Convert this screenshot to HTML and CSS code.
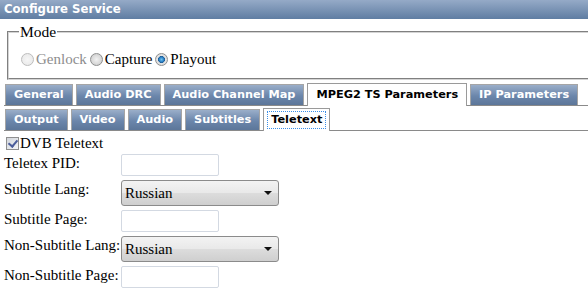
FILE: index.html
```html
<!DOCTYPE html>
<html lang="en">
<head>
    <meta charset="UTF-8">
    <title>Configure Service</title>
    <link rel="stylesheet" href="styles.css">
</head>
<body>
    <!-- title bar -->
    <div class="panel-title">Configure Service</div>

    <!-- mode -->
    <fieldset class="mode-box">
        <legend>Mode</legend>
        <div class="mode-options">
            <label class="mode-option disabled"><input type="radio" name="mode" disabled>Genlock</label>
            <label class="mode-option"><input type="radio" name="mode">Capture</label>
            <label class="mode-option"><input type="radio" name="mode" checked>Playout</label>
        </div>
    </fieldset>

    <!-- main tabs -->
    <div class="tabs">
        <a class="tab">General</a>
        <a class="tab">Audio DRC</a>
        <a class="tab">Audio Channel Map</a>
        <a class="tab active">MPEG2 TS Parameters</a>
        <a class="tab">IP Parameters</a>
    </div>

    <!-- sub tabs -->
    <div class="tabs sub-tabs">
        <a class="tab">Output</a>
        <a class="tab">Video</a>
        <a class="tab">Audio</a>
        <a class="tab">Subtitles</a>
        <a class="tab active"><span class="focus">Teletext</span></a>
    </div>

    <label class="check-row"><input type="checkbox" checked>DVB Teletext</label>

    <div class="form-grid">
        <label class="field-label">Teletex PID:</label>
        <input class="text-field" type="text">

        <label class="field-label">Subtitle Lang:</label>
        <div class="select-box">
            <select class="select-field">
                <option>Russian</option>
            </select>
        </div>

        <label class="field-label">Subtitle Page:</label>
        <input class="text-field" type="text">

        <label class="field-label">Non-Subtitle Lang:</label>
        <div class="select-box">
            <select class="select-field">
                <option>Russian</option>
            </select>
        </div>

        <label class="field-label">Non-Subtitle Page:</label>
        <input class="text-field" type="text">
    </div>
</body>
</html>
```

FILE: styles.css
```css
* {
    box-sizing: border-box;
}

body {
    margin: 0;
    font-family: "Liberation Serif", "Times New Roman", serif;
    font-size: 15px;
    color: #000;
    background: #fff;
    overflow: hidden;
}

/* title bar */
.panel-title {
    height: 19px;
    line-height: 19px;
    padding-left: 4px;
    font-family: "DejaVu Sans", Verdana, sans-serif;
    font-weight: bold;
    font-size: 11.7px;
    color: #fff;
    background: linear-gradient(#95aac7, #5f7da2);
}

/* mode fieldset */
.mode-box {
    margin: 4px -6px 0 7px;
    padding: 9px 10px 10px 10px;
    border: 2px groove #d4d4d4;
    min-width: 0;
}

.mode-box legend {
    padding: 0 1px;
    font-size: 15.5px;
    line-height: 18px;
}

.mode-options {
    display: flex;
    align-items: center;
}

.mode-option {
    display: flex;
    align-items: center;
    line-height: 18px;
    margin-right: 1px;
}

.mode-option.disabled {
    color: #8d8d8d;
}

.mode-option input {
    appearance: none;
    width: 13px;
    height: 13px;
    margin: 0 2px 0 2px;
    border: 1px solid #8e8f8f;
    border-radius: 50%;
    background: radial-gradient(circle at 50% 50%, #f2f2f2 0%, #d8d8d8 60%, #c8c8c8 100%);
}

.mode-option input:checked {
    background: radial-gradient(circle at 50% 50%, #6fc3f0 0%, #2a7fc4 30%, #1b5a94 42%, #e4e4e4 48%, #d4d4d4 100%);
}

.mode-option input:disabled {
    border-color: #bdbdbd;
    background: radial-gradient(circle, #f6f6f6 0%, #e6e6e6 100%);
}

/* tabs */
.tabs {
    display: flex;
    align-items: flex-end;
    gap: 3px;
    margin: 3px 0 0 4px;
    padding-left: 1px;
    border-bottom: 1px solid #8a8a8a;
}

.sub-tabs {
    margin-top: 2px;
}

.tab {
    height: 21px;
    line-height: 19px;
    padding: 0 8px;
    border: 1px solid #a5a5a5;
    border-bottom: none;
    background: linear-gradient(#9aaec9, #6b86ab 55%, #5c7699);
    color: #fff;
    font-family: "DejaVu Sans", Verdana, sans-serif;
    font-weight: bold;
    font-size: 11.3px;
    white-space: nowrap;
}

.tab.active {
    height: 23px;
    line-height: 21px;
    margin-bottom: -1px;
    border-color: #9a9a9a;
    background: #fff;
    color: #000;
}

.tab .focus {
    display: inline-block;
    line-height: 14px;
    padding: 1px 3px;
    margin: 0 -4px;
    outline: 1px dotted #3a8ee8;
}

/* checkbox row */
.check-row {
    display: flex;
    align-items: center;
    height: 18px;
    margin-top: 3px;
}

.check-row input {
    appearance: none;
    position: relative;
    width: 13px;
    height: 13px;
    margin: 0 1px 0 6px;
    border: 1px solid #8f8f8f;
    background: linear-gradient(135deg, #d2d6dc, #f4f5f7);
}

.check-row input:checked::after {
    content: "";
    position: absolute;
    left: 3px;
    top: 0;
    width: 4px;
    height: 7px;
    border: solid #4b5d9a;
    border-width: 0 2px 2px 0;
    transform: rotate(40deg);
}

/* form */
.form-grid {
    display: grid;
    grid-template-columns: 117px auto;
    justify-items: start;
    align-items: start;
    row-gap: 4px;
    margin-top: 2px;
    padding-left: 4px;
}

.field-label {
    line-height: 18px;
    white-space: nowrap;
}

.text-field {
    width: 98px;
    height: 22px;
    border: 1px solid #d3d9e2;
    border-radius: 2px;
    font: 15px "Liberation Serif", serif;
}

.select-box {
    position: relative;
}

.select-box::after {
    content: "";
    position: absolute;
    right: 7px;
    top: 11px;
    border-left: 4px solid transparent;
    border-right: 4px solid transparent;
    border-top: 4px solid #111;
    pointer-events: none;
}

.select-field {
    appearance: none;
    width: 158px;
    height: 26px;
    padding: 0 0 0 3px;
    border: 1px solid #8b8b8b;
    border-radius: 3px;
    background: linear-gradient(#f3f3f3, #e9e9e9 48%, #dcdcdc 52%, #cfcfcf);
    font: 15px "Liberation Serif", serif;
    color: #000;
}
```
